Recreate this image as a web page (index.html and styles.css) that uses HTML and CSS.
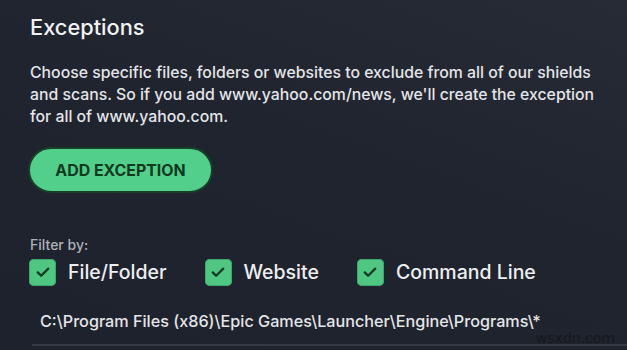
FILE: index.html
```html
<!DOCTYPE html>
<html lang="en">
<head>
  <meta charset="UTF-8">
  <meta name="viewport" content="width=device-width, initial-scale=1.0">
  <title>Exceptions</title>
  <link rel="stylesheet" href="styles.css">
</head>
<body>
  <div class="panel">
    <h1 class="title">Exceptions</h1>
    <p class="intro">Choose specific files, folders or websites to exclude from all of our shields and scans. So if you add www.yahoo.com/news, we'll create the exception for all of www.yahoo.com.</p>

    <button class="add-btn">ADD EXCEPTION</button>

    <!-- Filters -->
    <div class="filter-label">Filter by:</div>
    <div class="filters">
      <label class="filter">
        <span class="check"><svg viewBox="0 0 24 24" width="18" height="18"><path d="M5 12.5l4.5 4.5L19 7.5" fill="none" stroke="#0f3a20" stroke-width="3" stroke-linecap="round" stroke-linejoin="round"/></svg></span>
        File/Folder
      </label>
      <label class="filter">
        <span class="check"><svg viewBox="0 0 24 24" width="18" height="18"><path d="M5 12.5l4.5 4.5L19 7.5" fill="none" stroke="#0f3a20" stroke-width="3" stroke-linecap="round" stroke-linejoin="round"/></svg></span>
        Website
      </label>
      <label class="filter">
        <span class="check"><svg viewBox="0 0 24 24" width="18" height="18"><path d="M5 12.5l4.5 4.5L19 7.5" fill="none" stroke="#0f3a20" stroke-width="3" stroke-linecap="round" stroke-linejoin="round"/></svg></span>
        Command Line
      </label>
    </div>

    <!-- Exception list -->
    <div class="exception-row">C:\Program Files (x86)\Epic Games\Launcher\Engine\Programs\*</div>
    <div class="row-divider"></div>
  </div>
  <div class="watermark">wsxdn.com</div>
</body>
</html>
```

FILE: styles.css
```css
html, body {
  height: 100%;
}
body {
  margin: 0;
  overflow: hidden;
  background: linear-gradient(200deg, #272b36 0%, #20242e 45%, #1e222c 100%);
  font-family: Inter, Roboto, "Liberation Sans", sans-serif;
  color: #e6e7ea;
  position: relative;
}
.panel {
  padding: 13px 0 0 30px;
}
.title {
  margin: 0;
  font-size: 21.8px;
  line-height: 28px;
  font-weight: 500;
  color: #f1f2f4;
}
.intro {
  margin: 21px 0 0;
  width: 570px;
  font-size: 15.8px;
  line-height: 22px;
  font-weight: 500;
  color: #e4e5e8;
}
.add-btn {
  display: block;
  margin: 19px 0 0 -2px;
  width: 185px;
  height: 46px;
  border: 2px solid #17402a;
  border-radius: 23px;
  background: #52d08b;
  color: #0f3a20;
  font-family: Inter, Roboto, "Liberation Sans", sans-serif;
  font-size: 15.9px;
  font-weight: 700;
  cursor: pointer;
}
.filter-label {
  margin-top: 43px;
  font-size: 14px;
  line-height: 18px;
  font-weight: 500;
  color: #aeb1b8;
}
.filters {
  display: flex;
  align-items: center;
  gap: 38px;
  margin-top: 4px;
  margin-left: -1px;
}
.filter {
  display: flex;
  align-items: center;
  gap: 12px;
  font-size: 19.5px;
  line-height: 28px;
  font-weight: 500;
  color: #eceef0;
}
.check {
  display: flex;
  align-items: center;
  justify-content: center;
  width: 27px;
  height: 27px;
  border-radius: 5px;
  background: #4fc782;
  box-shadow: inset 0 0 0 1px #3aa86a;
}
.exception-row {
  margin-top: 25px;
  padding-left: 10px;
  font-size: 16.2px;
  line-height: 20px;
  font-weight: 500;
  color: #e4e5e8;
}
.row-divider {
  margin: 13px 0 0 2px;
  border-top: 2px solid #353944;
}
.watermark {
  position: absolute;
  right: 12px;
  bottom: 4px;
  font-family: "DejaVu Sans", sans-serif;
  font-size: 14px;
  color: #15171c;
}
```
